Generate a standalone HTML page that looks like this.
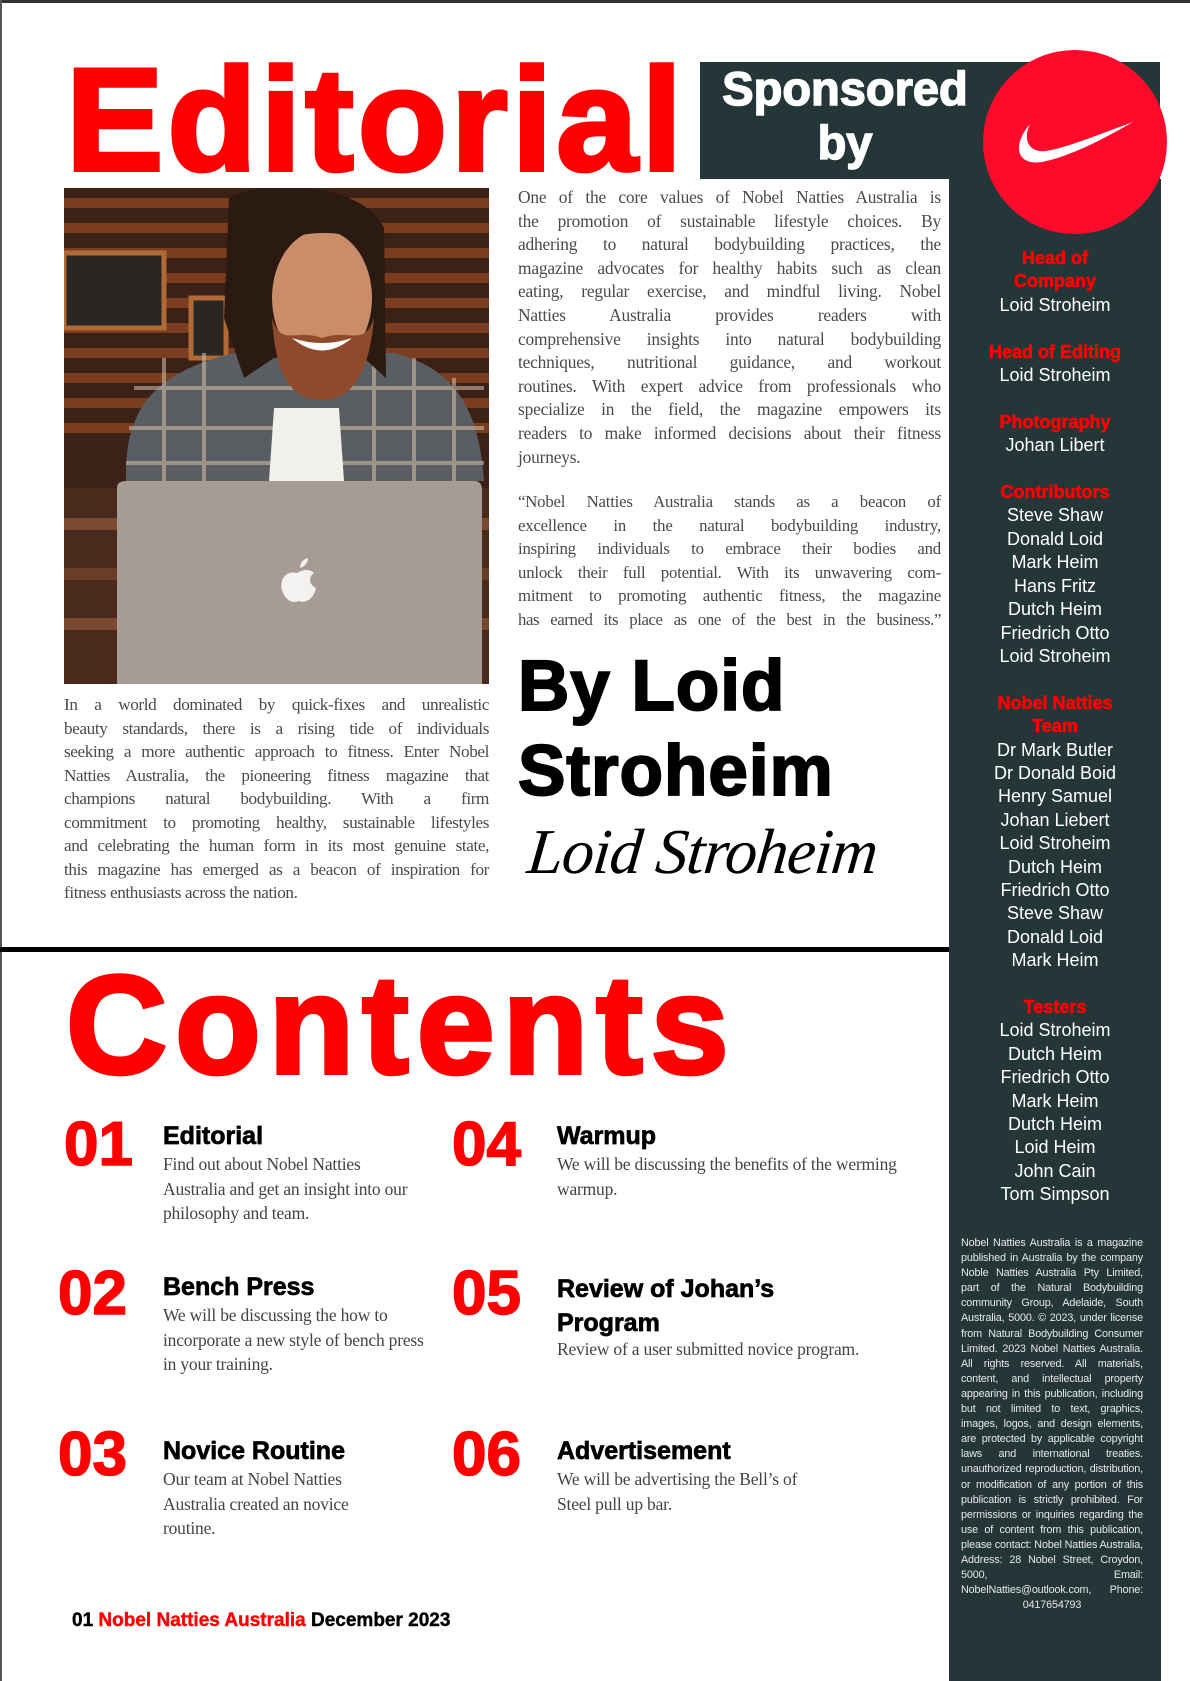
<!DOCTYPE html>
<html><head><meta charset="utf-8"><style>
*{margin:0;padding:0;box-sizing:border-box}
body{width:1190px;height:1681px;position:relative;background:#fff;overflow:hidden;font-family:"Liberation Sans",Arial,sans-serif}
.abs{position:absolute}
.serif{font-family:"Liberation Serif","Times New Roman",serif;color:#4a4a4a}
.serif div{white-space:nowrap;text-align:justify;text-align-last:justify}
.serif div.l{text-align-last:left}
.sb{position:absolute;left:949px;top:179px;width:212px;height:1502px;background:#243637}
.cred{position:absolute;left:949px;top:247px;width:212px;text-align:center;font-size:18px;line-height:23.4px;color:#fff}
.cred b{color:#f00;font-weight:bold;-webkit-text-stroke:0.6px #f00}
.num{position:absolute;color:#f00;font-weight:bold;font-size:62px;line-height:62px;-webkit-text-stroke:1.5px #f00}
.tt{position:absolute;font-weight:bold;font-size:25px;line-height:34px;color:#000;-webkit-text-stroke:0.7px #000}
.ds{position:absolute;font-family:"Liberation Serif",serif;font-size:17.5px;line-height:24.5px;color:#444;letter-spacing:-0.2px}
</style></head><body>
<div class="abs" style="left:0;top:0;width:1190px;height:3px;background:#333"></div>
<div class="abs" style="left:0;top:0;width:2px;height:1681px;background:#555"></div>

<div class="abs" style="left:66px;top:40px;font-size:146px;line-height:160px;font-weight:bold;color:#f00;letter-spacing:4px;-webkit-text-stroke:4px #f00">Editorial</div>

<div class="abs" style="left:700px;top:62px;width:460px;height:117px;background:#243637"></div>
<div class="sb"></div>
<div class="abs" style="left:700px;top:62px;width:290px;text-align:center;color:#fff;font-weight:bold;font-size:47px;line-height:54px;-webkit-text-stroke:1.5px #fff">Sponsored<br>by</div>
<svg class="abs" style="left:0;top:0" width="1190" height="260">
<circle cx="1075" cy="142" r="92" fill="#ff0a2a"/>
<path d="M1030,124 C1012,145 1016,166 1042,162 C1068,157 1102,140 1133,122 C1100,134 1066,148 1046,151 C1030,153 1022,141 1030,124 Z" fill="#fff"/>
</svg>

<svg class="abs" style="left:64px;top:188px" width="425" height="496" viewBox="0 0 425 496">
<rect width="425" height="496" fill="#3b2116"/>
<g fill="#8a4422" opacity=".8">
<rect y="10" width="425" height="10"/><rect y="35" width="425" height="10"/><rect y="60" width="425" height="10"/><rect y="85" width="425" height="10"/><rect y="110" width="425" height="10"/><rect y="135" width="425" height="10"/><rect y="160" width="425" height="10"/><rect y="185" width="425" height="10"/><rect y="210" width="425" height="10"/><rect y="235" width="425" height="10"/>
</g>
<rect x="0" y="300" width="425" height="196" fill="#4a2a1c"/>
<rect x="0" y="330" width="425" height="12" fill="#7a4a30"/><rect x="0" y="380" width="425" height="12" fill="#6a3d28"/><rect x="0" y="430" width="425" height="12" fill="#7a4a30"/>
<rect x="0" y="65" width="100" height="75" fill="#2a2624" stroke="#b06a35" stroke-width="5"/>
<rect x="127" y="110" width="35" height="60" fill="#2a2624" stroke="#b06a35" stroke-width="5"/>
<path d="M62,293 C60,220 90,185 170,165 L330,165 C390,180 415,220 420,293 Z" fill="#5a5e62"/>
<g stroke="#c9b8a0" stroke-width="4" opacity=".6"><path d="M70,200H420M65,240H420M62,275H420M100,170V293M140,165V293M310,165V293M350,170V293M390,190V293"/></g>
<path d="M210,220 L275,220 L280,293 L205,293 Z" fill="#f2f0ec"/>
<path d="M165,10 C200,-10 300,-5 320,40 L322,190 L300,170 L210,170 L180,190 L160,130 Z" fill="#2a1a12"/>
<ellipse cx="258" cy="110" rx="50" ry="68" fill="#c98d6a"/>
<path d="M208,130 C212,200 235,212 258,212 C285,212 305,190 310,130 C300,160 285,140 258,150 C230,140 218,160 208,130 Z" fill="#8e4a2a"/>
<path d="M228,150 Q258,175 288,150 Q258,160 228,150 Z" fill="#fff"/>
<path d="M205,60 C215,30 300,30 312,60 C290,40 230,40 205,60 Z" fill="#2a1a12"/>
<path d="M53,300 Q53,293 62,293 L410,293 Q418,293 418,302 L418,496 L53,496 Z" fill="#a69c95"/>
<path d="M233,385 C222,382 215,392 218,402 C221,412 228,416 235,413 C242,416 250,410 252,400 C244,396 245,388 250,385 C245,380 238,382 233,385 Z M236,380 C236,374 240,371 244,370 C244,375 240,379 236,380 Z" fill="#f4f2f0"/>
</svg>

<div class="abs serif" style="left:518px;top:186px;width:423px;font-size:17.4px;line-height:23.6px;letter-spacing:-0.2px">
<div>One of the core values of Nobel Natties Australia is</div>
<div>the promotion of sustainable lifestyle choices. By</div>
<div>adhering to natural bodybuilding practices, the</div>
<div>magazine advocates for healthy habits such as clean</div>
<div>eating, regular exercise, and mindful living. Nobel</div>
<div>Natties Australia provides readers with</div>
<div>comprehensive insights into natural bodybuilding</div>
<div>techniques, nutritional guidance, and workout</div>
<div>routines. With expert advice from professionals who</div>
<div>specialize in the field, the magazine empowers its</div>
<div>readers to make informed decisions about their fitness</div>
<div class="l">journeys.</div>
</div>
<div class="abs serif" style="left:518px;top:490px;width:423px;font-size:16.8px;line-height:23.6px;letter-spacing:-0.2px">
<div>“Nobel Natties Australia stands as a beacon of</div>
<div>excellence in the natural bodybuilding industry,</div>
<div>inspiring individuals to embrace their bodies and</div>
<div>unlock their full potential. With its unwavering com-</div>
<div>mitment to promoting authentic fitness, the magazine</div>
<div style="letter-spacing:-0.4px">has earned its place as one of the best in the business.”</div>
</div>

<div class="abs" style="left:518px;top:644px;font-size:71px;line-height:85px;font-weight:bold;color:#000;letter-spacing:1px;-webkit-text-stroke:2px #000">By Loid<br>Stroheim</div>
<div class="abs" style="left:528px;top:812px;font-family:'Liberation Serif',serif;font-style:italic;font-size:64px;line-height:80px;color:#000;letter-spacing:-1px;transform:skewX(-6deg)">Loid Stroheim</div>

<div class="abs serif" style="left:64px;top:693px;width:425px;font-size:17.2px;line-height:23.5px;letter-spacing:-0.4px">
<div>In a world dominated by quick-fixes and unrealistic</div>
<div>beauty standards, there is a rising tide of individuals</div>
<div>seeking a more authentic approach to fitness. Enter Nobel</div>
<div>Natties Australia, the pioneering fitness magazine that</div>
<div>champions natural bodybuilding. With a firm</div>
<div>commitment to promoting healthy, sustainable lifestyles</div>
<div>and celebrating the human form in its most genuine state,</div>
<div>this magazine has emerged as a beacon of inspiration for</div>
<div class="l">fitness enthusiasts across the nation.</div>
</div>

<div class="abs" style="left:0;top:947px;width:949px;height:5px;background:#000"></div>

<div class="abs" style="left:66px;top:955px;font-size:140px;line-height:140px;font-weight:bold;color:#f00;letter-spacing:8px;-webkit-text-stroke:4px #f00">Contents</div>

<div class="num" style="left:64px;top:1114px">01</div>
<div class="tt" style="left:163px;top:1119px">Editorial</div>
<div class="ds" style="left:163px;top:1152px;width:250px">Find out about Nobel Natties Australia and get an insight into our philosophy and team.</div>

<div class="num" style="left:58px;top:1263px">02</div>
<div class="tt" style="left:163px;top:1270px">Bench Press</div>
<div class="ds" style="left:163px;top:1303px;width:272px">We will be discussing the how to incorporate a new style of bench press in your training.</div>

<div class="num" style="left:58px;top:1424px">03</div>
<div class="tt" style="left:163px;top:1434px">Novice Routine</div>
<div class="ds" style="left:163px;top:1467px;width:195px">Our team at Nobel Natties Australia created an novice routine.</div>

<div class="num" style="left:452px;top:1114px">04</div>
<div class="tt" style="left:557px;top:1119px">Warmup</div>
<div class="ds" style="left:557px;top:1152px;width:345px">We will be discussing the benefits of the werming warmup.</div>

<div class="num" style="left:452px;top:1263px">05</div>
<div class="tt" style="left:557px;top:1272px">Review of Johan’s<br>Program</div>
<div class="ds" style="left:557px;top:1337px;width:360px">Review of a user submitted novice program.</div>

<div class="num" style="left:452px;top:1424px">06</div>
<div class="tt" style="left:557px;top:1434px">Advertisement</div>
<div class="ds" style="left:557px;top:1467px;width:250px">We will be advertising the Bell’s of Steel pull up bar.</div>

<div class="abs" style="left:72px;top:1610px;font-size:19px;font-weight:bold;color:#000;-webkit-text-stroke:0.4px #000">01 <span style="color:#f00;-webkit-text-stroke:0.4px #f00">Nobel Natties Australia</span> December 2023</div>

<div class="cred">
<b>Head of<br>Company</b><br>Loid Stroheim<br><br>
<b>Head of Editing</b><br>Loid Stroheim<br><br>
<b>Photography</b><br>Johan Libert<br><br>
<b>Contributors</b><br>Steve Shaw<br>Donald Loid<br>Mark Heim<br>Hans Fritz<br>Dutch Heim<br>Friedrich Otto<br>Loid Stroheim<br><br>
<b>Nobel Natties<br>Team</b><br>Dr Mark Butler<br>Dr Donald Boid<br>Henry Samuel<br>Johan Liebert<br>Loid Stroheim<br>Dutch Heim<br>Friedrich Otto<br>Steve Shaw<br>Donald Loid<br>Mark Heim<br><br>
<b>Testers</b><br>Loid Stroheim<br>Dutch Heim<br>Friedrich Otto<br>Mark Heim<br>Dutch Heim<br>Loid Heim<br>John Cain<br>Tom Simpson
</div>

<div class="abs" style="left:961px;top:1236px;width:182px;font-size:10.8px;line-height:15.1px;color:#e8e8e8;text-align:justify;text-align-last:center;letter-spacing:-0.15px">Nobel Natties Australia is a magazine published in Australia by the company Noble Natties Australia Pty Limited, part of the Natural Bodybuilding community Group, Adelaide, South Australia, 5000. © 2023, under license from Natural Bodybuilding Consumer Limited. 2023 Nobel Natties Australia. All rights reserved. All materials, content, and intellectual property appearing in this publication, including but not limited to text, graphics, images, logos, and design elements, are protected by applicable copyright laws and international treaties. unauthorized reproduction, distribution, or modification of any portion of this publication is strictly prohibited. For permissions or inquiries regarding the use of content from this publication, please contact: Nobel Natties Australia, Address: 28 Nobel Street, Croydon, 5000, Email: NobelNatties@outlook.com, Phone: 0417654793</div>
</body></html>
